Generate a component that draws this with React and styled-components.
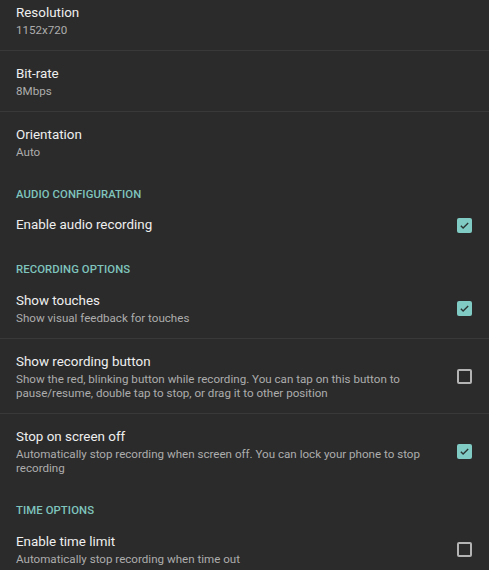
import React from "react";
import styled, { createGlobalStyle } from "styled-components";

const Global = createGlobalStyle`
  html, body { margin: 0; padding: 0; background: #2b2b2b; }
  body { font-family: Roboto, "Noto Sans", sans-serif; overflow: hidden; }
  * { box-sizing: border-box; }
`;

const Screen = styled.div`
  width: 489px;
  height: 570px;
  overflow: hidden;
  background: #2b2b2b;
`;

const List = styled.div`
  display: flex;
  flex-direction: column;
  margin-top: -10px;
`;

const Header = styled.div`
  padding: 16px 16px 1px;
  font-size: 11.3px;
  line-height: 14px;
  font-weight: 500;
  color: #7fc4bd;
  letter-spacing: 0.1px;
`;

const Item = styled.div`
  display: flex;
  align-items: center;
  gap: 12px;
  padding: ${(p) => (p.$single ? "0" : "14px")} 17px ${(p) => (p.$single ? "0" : "13px")} 16px;
  min-height: ${(p) => (p.$single ? "44px" : "auto")};
  border-bottom: ${(p) => (p.$divider ? "1px solid #393939" : "none")};
`;

const Texts = styled.div`
  flex: 1;
  display: flex;
  flex-direction: column;
  gap: 1px;
`;

const Title = styled.div`
  font-size: 13.4px;
  line-height: 18px;
  color: #efefef;
`;

const Summary = styled.div`
  font-size: 11.6px;
  line-height: 14px;
  color: #adadad;
`;

const Box = styled.div`
  width: 15px;
  height: 15px;
  flex: none;
  border-radius: 2px;
  display: flex;
  align-items: center;
  justify-content: center;
  background: ${(p) => (p.$checked ? "#80cbc4" : "transparent")};
  border: ${(p) => (p.$checked ? "none" : "2px solid #b4b4b4")};
`;

const Check = ({ checked }) => (
  <Box $checked={checked}>
    {checked && (
      <svg width="11" height="11" viewBox="0 0 24 24">
        <path d="M4 12.5l5 5L20 6.5" fill="none" stroke="#2b3533" strokeWidth="3" />
      </svg>
    )}
  </Box>
);

const Pref = ({ title, summary, checkbox, checked, divider }) => (
  <Item $single={!summary} $divider={divider}>
    <Texts>
      <Title>{title}</Title>
      {summary && <Summary>{summary}</Summary>}
    </Texts>
    {checkbox && <Check checked={checked} />}
  </Item>
);

export default function App() {
  return (
    <Screen>
      <Global />
      <List>
        <Pref title="Resolution" summary="1152x720" divider />
        <Pref title="Bit-rate" summary="8Mbps" divider />
        <Pref title="Orientation" summary="Auto" />
        <Header>AUDIO CONFIGURATION</Header>
        <Pref title="Enable audio recording" checkbox checked />
        <Header>RECORDING OPTIONS</Header>
        <Pref title="Show touches" summary="Show visual feedback for touches" checkbox checked divider />
        <Pref
          title="Show recording button"
          summary="Show the red, blinking button while recording. You can tap on this button to pause/resume, double tap to stop, or drag it to other position"
          checkbox
          divider
        />
        <Pref
          title="Stop on screen off"
          summary="Automatically stop recording when screen off. You can lock your phone to stop recording"
          checkbox
          checked
        />
        <Header>TIME OPTIONS</Header>
        <Pref title="Enable time limit" summary="Automatically stop recording when time out" checkbox />
      </List>
    </Screen>
  );
}
